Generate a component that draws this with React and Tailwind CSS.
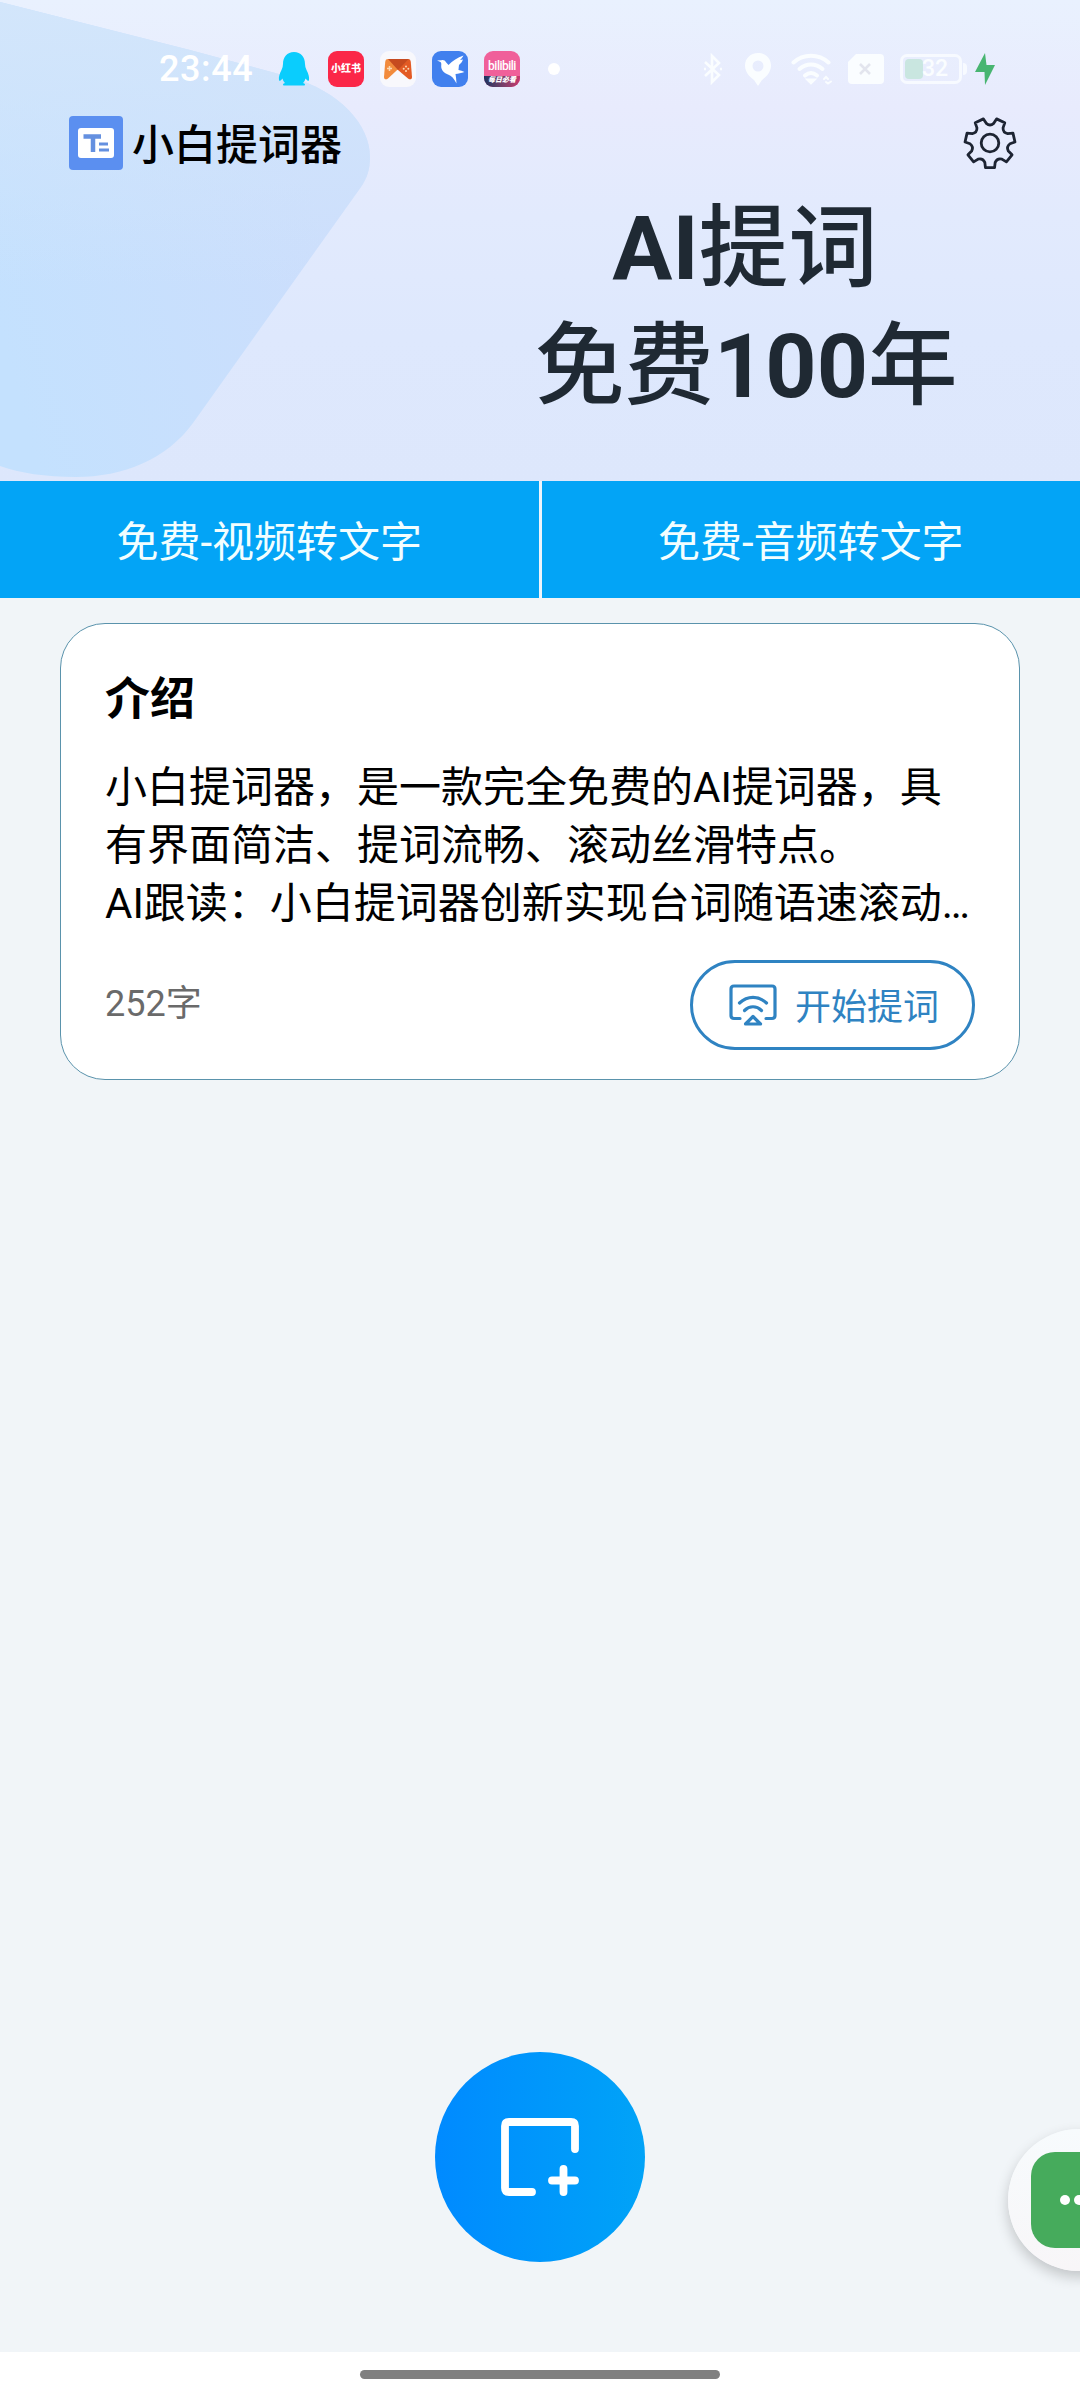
import React from "react";

const statusApps = [
  { name: "qq", icon: <QQIcon /> },
  { name: "xiaohongshu", icon: <RedBookIcon /> },
  { name: "games", icon: <GameIcon /> },
  { name: "thunder", icon: <BirdIcon /> },
  { name: "bilibili", icon: <BilibiliIcon /> },
];

function QQIcon() {
  return (
    <svg viewBox="0 0 36 36" className="w-9 h-9">
      <path
        d="M18 1C11 1 7 6 7 13c0 2-.5 4-1.500 6C3.500 23 2.500 26 3 29c.2 1.500 1.500 1 3.500-1.500.5 2 1.200 3 2.500 4.500-2 .6-2.500 1.500-1.500 2.500h21c1-1 .5-1.900-1.500-2.500 1.300-1.500 2-2.500 2.500-4.500 2 2.500 3.300 3 3.500 1.500.5-3-.5-6-2.500-10-1-2-1.500-4-1.500-6 0-7-4-12-11-12z"
        fill="#0acdfd"
      />
    </svg>
  );
}

function RedBookIcon() {
  return (
    <div className="w-9 h-9 rounded-[9px] bg-[#fb2748] flex items-center justify-center text-white text-[10px] font-black leading-none whitespace-nowrap">
      小红书
    </div>
  );
}

function GameIcon() {
  return (
    <div className="w-9 h-9 rounded-[9px] bg-[#f8f8fc] flex items-center justify-center">
      <svg viewBox="0 0 28 21" className="w-7 h-[21px]">
        <path d="M4 0h20c2 0 2.500 1 2.800 3L28 18c0 2.500-2 3-4 1.500L14 11z" fill="#e35a24" />
        <path d="M4 0C2 0 1.500 1 1.200 3L0 18c0 2.500 2 3 4 1.500L25 0z" fill="#f28b3c" />
        <path d="M4 0h21L14 11z" fill="#c64a1f" />
        <path d="M5.500 7v5M3 9.500h5" stroke="#fbd9b4" strokeWidth="1.500" />
        <g fill="#fbd9b4">
          <circle cx="22" cy="7.500" r="1" />
          <circle cx="22" cy="12" r="1" />
          <circle cx="19.700" cy="9.800" r="1" />
          <circle cx="24.300" cy="9.800" r="1" />
        </g>
      </svg>
    </div>
  );
}

function BirdIcon() {
  return (
    <svg viewBox="0 0 36 36" className="w-9 h-9">
      <rect width="36" height="36" rx="9" fill="#4180ee" />
      <path
        d="M5 9.500l4.500-.2c2-.6 3.500.4 4.500 2l2.500 2.700c4-4 9-7.500 15-9.500-1 2-2 3-3.500 4.500 1.200 0 2-.2 3-.5-1 2.500-2.200 4-4 5.500-.3 2.500-.4 4-.5 5 2 .3 4 1 6 2-3.500 1.300-6 1.600-9 2 .5 3 .8 6 1 9.500-2.500-5-5-8-8.500-9C11.500 22 9 18.500 9.200 15c.2-2 .3-3-.7-4z"
        fill="#fff"
      />
    </svg>
  );
}

function BilibiliIcon() {
  return (
    <div className="w-9 h-9 rounded-[9px] overflow-hidden bg-[#f0609a] flex flex-col justify-end items-center">
      <div className="flex-1 flex items-end text-white text-[12px] leading-[15px] font-medium tracking-[-0.5px]">
        bilibili
      </div>
      <div className="w-full h-[11px] mt-0.5 bg-gradient-to-r from-[#17335f] to-[#c8376f] text-white text-[7px] leading-[9px] font-black italic text-center whitespace-nowrap">
        每日必看
      </div>
    </div>
  );
}

function StatusBar() {
  return (
    <div className="h-[104px] pt-[51px] pl-[159px] pr-[85px] flex items-start justify-between">
      <div className="flex items-center h-9">
        <span className="w-[117px] text-[36px] leading-9 font-medium tracking-[0.6px] text-white">
          23:44
        </span>
        <div className="flex items-center gap-4">
          {statusApps.map((app) => (
            <div key={app.name}>{app.icon}</div>
          ))}
        </div>
        <div className="w-3 h-3 ml-7 rounded-full bg-white" />
      </div>

      <div className="flex items-center h-9 text-[#fafdff]">
        {/* Bluetooth */}
        <svg viewBox="0 0 20 34" className="w-5 h-[34px]" fill="none" stroke="currentColor" strokeWidth="2.600">
          <path d="M2 10l14 13-7 7V4l7 7L2 24" />
          <path d="M1 17h2M17 17h2" />
        </svg>
        {/* Location */}
        <svg viewBox="0 0 28 34" className="w-7 h-[34px] ml-[21px]">
          <path
            d="M14 1C6.500 1 1 6.500 1 13.500c0 6 4 11 9 14.500l4 6 4-6c5-3.500 9-8.500 9-14.500C27 6.500 21.500 1 14 1zm0 7.500a5.500 5.500 0 110 11 5.500 5.500 0 010-11z"
            fill="currentColor"
            fillRule="evenodd"
          />
        </svg>
        {/* Wifi */}
        <svg viewBox="0 0 42 34" className="w-[42px] h-[34px] ml-[19px]" fill="none" stroke="currentColor" strokeWidth="4" strokeLinecap="round">
          <path d="M2.500 10.500c10-9 25-9 35 0" />
          <path d="M8.500 17c7-6 16-6 23 0" />
          <path d="M14 23.500c4-3.300 8-3.300 12 0" />
          <path d="M18.500 28.500l1.500 1.500 1.500-1.500z" />
          <path d="M33 27l2-2 2 2M35 30l2 1.500 3-2" strokeWidth="2" />
        </svg>
        {/* Missing SIM */}
        <svg viewBox="0 0 36 30" className="w-9 h-[30px] ml-[15px]">
          <path d="M8 0h24q4 0 4 4v22q0 4-4 4H4q-4 0-4-4V8z" fill="currentColor" />
          <path d="M12 10l10 10M22 10L12 20" stroke="#e3e5ee" strokeWidth="2.600" />
        </svg>
        {/* Battery */}
        <div className="flex items-center ml-4">
          <div className="w-[62px] h-[30px] rounded-[7px] border-[3px] border-[#f7faff] p-0.5 relative">
            <div className="w-[18px] h-full rounded-sm bg-[#c9e6e0]" />
            <span className="absolute inset-0 pl-2 text-center text-[23px] leading-6 font-medium">
              32
            </span>
          </div>
          <div className="w-1 h-3 ml-px rounded-r bg-[#f7faff]" />
        </div>
        <svg viewBox="0 0 20 32" className="w-5 h-8 ml-2">
          <path d="M10 0L0 19h9.500L10 32l10-20h-8.500z" fill="#48b571" />
        </svg>
      </div>
    </div>
  );
}

function Logo() {
  return (
    <svg viewBox="0 0 54 54" className="w-[54px] h-[54px]">
      <rect width="54" height="54" rx="4" fill="#5b8ff0" />
      <rect x="9" y="12" width="36" height="30" rx="3" fill="#fff" />
      <path d="M14.500 20.500h17.500M24 19v17" stroke="#6490e0" strokeWidth="4.500" />
      <path d="M30 28h9M30 34h10" stroke="#6490e0" strokeWidth="3" />
    </svg>
  );
}

// Seven teeth, the first one pointing straight down
function gearPath(cx, cy, outer, inner) {
  const point = (deg, r) => {
    const a = (deg * Math.PI) / 180;
    return `${(cx + r * Math.cos(a)).toFixed(2)} ${(cy + r * Math.sin(a)).toFixed(2)}`;
  };
  let d = "";
  for (let i = 0; i < 7; i++) {
    const a = 90 + (i * 360) / 7;
    d += `${i === 0 ? "M" : "L"}${point(a - 15, inner + 1.5)}`;
    d += `L${point(a - 10.5, outer)}L${point(a + 10.5, outer)}L${point(a + 15, inner + 1.5)}`;
    d += `Q${point(a + 360 / 14, inner - 2)} ${point(a + 360 / 7 - 15, inner + 1.5)}`;
  }
  return d + "Z";
}

function GearIcon() {
  return (
    <svg viewBox="0 0 54 54" className="w-[54px] h-[54px]" fill="none" stroke="#1d2433" strokeWidth="2.800" strokeLinejoin="round">
      <path d={gearPath(27, 27, 25, 18.5)} />
      <circle cx="27" cy="27" r="8.800" />
    </svg>
  );
}

function Hero() {
  const shape =
    "M0 2L190 50l100 27c50 14 80 48 80 80 0 13-3 21-9 30L193 423c-26 36-70 54-117 54-31 0-56-4-76-11z";

  return (
    <header className="relative h-[481px] bg-[linear-gradient(180deg,#e9f1fe_0%,#e8ebfd_22%,#e2eafd_45%,#dee8fd_70%,#dde7fc_100%)]">
      {/* Background shape */}
      <svg viewBox="0 0 370 481" className="absolute left-0 top-0 w-[370px] h-[481px]">
        <defs>
          <linearGradient id="blob" x1="0" y1="0.700" x2="0.850" y2="0.400">
            <stop offset="0" stopColor="#c4e1fe" />
            <stop offset="1" stopColor="#ccdefc" />
          </linearGradient>
          <linearGradient id="blobTop" x1="0" y1="0" x2="0" y2="1">
            <stop offset="0" stopColor="#d3e6fb" />
            <stop offset="0.600" stopColor="#d3e6fb" stopOpacity="0" />
          </linearGradient>
        </defs>
        <path d={shape} fill="url(#blob)" />
        <path d={shape} fill="url(#blobTop)" />
      </svg>

      <div className="relative">
        <StatusBar />
        <div className="flex items-center justify-between pl-[69px] pr-[63px] pt-3">
          <div className="flex items-center gap-[9px]">
            <Logo />
            <span className="pt-1.5 text-[42px] leading-[48px] font-medium text-black">小白提词器</span>
          </div>
          <GearIcon />
        </div>
        <h1 className="w-[420px] ml-[535px] mt-5 text-center text-[89.5px] leading-[118px] font-medium text-[#1f2933] whitespace-nowrap">
          <span className="font-bold">AI</span>提词
          <br />
          免费<span className="font-bold">100</span>年
        </h1>
      </div>
    </header>
  );
}

function Tabs() {
  return (
    <div className="grid grid-cols-2 gap-[3px] h-[117px] bg-[#eef4fb]">
      {["免费-视频转文字", "免费-音频转文字"].map((label) => (
        <button key={label} className="pt-1.5 bg-[#03a4f6] text-[#f2feff] text-[42px] leading-none">
          {label}
        </button>
      ))}
    </div>
  );
}

function PromptIcon() {
  return (
    <svg viewBox="0 0 48 42" className="w-12 h-[42px]" fill="none" stroke="currentColor" strokeWidth="3.200" strokeLinecap="round" strokeLinejoin="round">
      <path d="M11 34.500H5q-3 0-3-3V5q0-3 3-3h38q3 0 3 3v26.500q0 3-3 3h-6" />
      <path d="M10.500 19c8-7.500 19-7.500 27 0" />
      <path d="M15.500 26.500c5-5 12-5 17 0" />
      <path d="M24 32.500l7.500 7.500h-15z" />
    </svg>
  );
}

function ScriptCard() {
  return (
    <section className="h-[457px] mx-[60px] mt-[25px] px-11 pt-[45px] rounded-[45px] border border-[#5a93ac] bg-white">
      <h2 className="text-[45px] leading-[62px] font-bold text-black">介绍</h2>
      <p className="mt-7 text-[42px] leading-[58px] text-black whitespace-nowrap">
        小白提词器，是一款完全免费的AI提词器，具
        <br />
        有界面简洁、提词流畅、滚动丝滑特点。
        <br />
        AI跟读：小白提词器创新实现台词随语速滚动…
      </p>
      <div className="flex items-start justify-between mt-[27px]">
        <span className="pt-0.5 text-[36px] leading-[84px] text-[#6a6a6a]">252字</span>
        <button className="flex items-center w-[285px] h-[90px] pl-9 gap-[18px] rounded-full border-[3px] border-[#2f83c2] text-[#2f83c2] text-[36px]">
          <PromptIcon />
          <span className="pt-1.5 leading-10">开始提词</span>
        </button>
      </div>
    </section>
  );
}

export default function App() {
  return (
    <div className="relative w-[1080px] h-[2400px] overflow-hidden flex flex-col bg-[#f1f5f8] font-[Roboto,'Noto_Sans_CJK_SC',sans-serif]">
      <Hero />
      <Tabs />
      <ScriptCard />

      <div className="flex-1 flex items-end justify-center pb-[90px]">
        <button className="w-[210px] h-[210px] rounded-full bg-gradient-to-r from-[#008aff] to-[#02a3f7] flex items-center justify-center">
          <svg viewBox="0 0 78 78" className="w-[78px] h-[78px]" fill="none" stroke="#fff" strokeWidth="7.800" strokeLinecap="round" strokeLinejoin="round">
            <path d="M31 74H8q-4 0-4-4V8q0-4 4-4h62q4 0 4 4v23" />
            <path d="M62.500 51v23M51 62.500h23" />
          </svg>
        </button>
      </div>

      <div className="h-12 flex justify-center bg-white pt-[18px]">
        <div className="w-[360px] h-[9px] rounded-full bg-[#808080]" />
      </div>

      {/* Floating chat bubble, half off screen */}
      <div className="absolute left-[1008px] top-[2129px] w-[142px] h-[142px] rounded-full bg-gradient-to-b from-[#f7fbfd] to-[#f8f6f8] shadow-[0_6px_14px_rgba(0,0,0,0.2)] flex items-center justify-center">
        <div className="w-24 h-24 rounded-3xl bg-[#46ab5c] flex items-center justify-center gap-1">
          <div className="w-2.5 h-2.5 rounded-full bg-white" />
          <div className="w-2.5 h-2.5 rounded-full bg-white" />
          <div className="w-2.5 h-2.5 rounded-full bg-white" />
        </div>
      </div>
    </div>
  );
}
